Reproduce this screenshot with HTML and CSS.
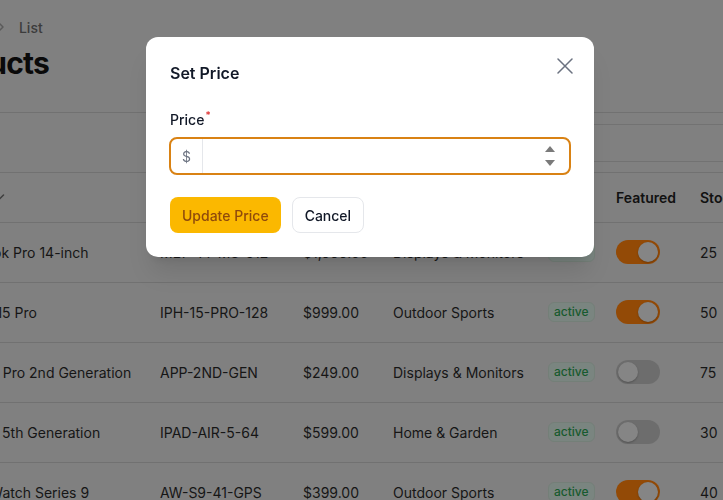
FILE: index.html
```html
<!DOCTYPE html>
<html lang="en">
<head>
<meta charset="utf-8">
<title>Products - List</title>
<link rel="stylesheet" href="styles.css">
</head>
<body>
<div class="page">
  <header class="page-header">
    <nav class="breadcrumb">
      <span>Products</span>
      <svg class="crumb-sep" width="12" height="12" viewBox="0 0 12 12"><path d="M4 2l4 4-4 4" fill="none" stroke="currentColor" stroke-width="1.5" stroke-linecap="round" stroke-linejoin="round"/></svg>
      <span>List</span>
    </nav>
    <h1 class="title">Products</h1>
  </header>

  <section class="table-card">
    <div class="toolbar">
      <div class="search"></div>
    </div>
    <table class="table">
      <colgroup>
        <col class="c-name"><col class="c-sku"><col class="c-price"><col class="c-cat"><col class="c-status"><col class="c-feat"><col class="c-stock">
      </colgroup>
      <thead>
        <tr>
          <th><span class="th-sort">Name <svg width="12" height="12" viewBox="0 0 12 12"><path d="M1.5 4l4.5 4.5L10.5 4" fill="none" stroke="currentColor" stroke-width="1.5" stroke-linecap="round" stroke-linejoin="round"/></svg></span></th>
          <th>SKU</th>
          <th>Price</th>
          <th>Category</th>
          <th>Status</th>
          <th>Featured</th>
          <th>Stock</th>
        </tr>
      </thead>
      <tbody>
        <tr>
          <td>MacBook Pro 14-inch</td><td>MBP-14-M3-512</td><td>$1,999.00</td><td>Displays &amp; Monitors</td>
          <td><span class="badge">active</span></td><td><span class="toggle on"><span class="knob"></span></span></td><td>25</td>
        </tr>
        <tr>
          <td>iPhone 15 Pro</td><td>IPH-15-PRO-128</td><td>$999.00</td><td>Outdoor Sports</td>
          <td><span class="badge">active</span></td><td><span class="toggle on"><span class="knob"></span></span></td><td>50</td>
        </tr>
        <tr>
          <td>AirPods Pro 2nd Generation</td><td>APP-2ND-GEN</td><td>$249.00</td><td>Displays &amp; Monitors</td>
          <td><span class="badge">active</span></td><td><span class="toggle"><span class="knob"></span></span></td><td>75</td>
        </tr>
        <tr>
          <td>iPad Air 5th Generation</td><td>IPAD-AIR-5-64</td><td>$599.00</td><td>Home &amp; Garden</td>
          <td><span class="badge">active</span></td><td><span class="toggle"><span class="knob"></span></span></td><td>30</td>
        </tr>
        <tr>
          <td>Apple Watch Series 9</td><td>AW-S9-41-GPS</td><td>$399.00</td><td>Outdoor Sports</td>
          <td><span class="badge">active</span></td><td><span class="toggle on"><span class="knob"></span></span></td><td>40</td>
        </tr>
      </tbody>
    </table>
  </section>
</div>

<div class="backdrop">
  <div class="modal" role="dialog" aria-label="Set Price">
    <div class="modal-head">
      <h2 class="modal-title">Set Price</h2>
      <button class="close" aria-label="Close">
        <svg width="16" height="16" viewBox="0 0 16 16"><path d="M1 1l14 14M15 1L1 15" fill="none" stroke="currentColor" stroke-width="1.5" stroke-linecap="round"/></svg>
      </button>
    </div>
    <div class="field">
      <label class="label">Price<sup class="req">*</sup></label>
      <div class="input-wrap">
        <span class="prefix">$</span>
        <input class="input" type="number">
        <span class="spin">
          <svg width="10" height="24" viewBox="0 0 10 24"><path d="M5 2l5 6H0z" fill="currentColor"/><path d="M0 16h10l-5 6z" fill="currentColor"/></svg>
        </span>
      </div>
    </div>
    <div class="actions">
      <button class="btn btn-primary">Update Price</button>
      <button class="btn btn-secondary">Cancel</button>
    </div>
  </div>
</div>
</body>
</html>
```

FILE: styles.css
```css
* { box-sizing: border-box; }

html, body {
  margin: 0;
  padding: 0;
}

body {
  font-family: Inter, "Noto Sans", sans-serif;
  background: #808080;
  color: #151515;
  overflow: hidden;
  height: 500px;
}

.page {
  width: 723px;
}

.page-header {
  padding-top: 17px;
  margin-left: -75px;
  height: 112px;
}

.breadcrumb {
  display: flex;
  align-items: center;
  gap: 10px;
  height: 20px;
  font-size: 14px;
  font-weight: 500;
  color: #3c3c3c;
}

.crumb-sep {
  color: #5a5a5a;
  margin-right: 2px;
}

.title {
  margin: 8px 0 0 -2px;
  font-size: 30px;
  line-height: 36px;
  font-weight: 700;
  letter-spacing: -0.025em;
  color: #0a0a0a;
}

.table-card {
  border-top: 1px solid #717171;
}

.toolbar {
  height: 60px;
  padding: 11px 0;
  display: flex;
  justify-content: flex-end;
  border-bottom: 1px solid #717171;
}

.search {
  width: 300px;
  margin-right: -40px;
  border: 1px solid #727272;
  border-radius: 8px;
  height: 38px;
}

.table {
  margin-left: -65px;
  width: 838px;
  table-layout: fixed;
  border-collapse: collapse;
  font-size: 14px;
}

.c-name { width: 213px; }
.c-sku { width: 143px; }
.c-price { width: 90px; }
.c-cat { width: 155px; }
.c-status { width: 68px; }
.c-feat { width: 84px; }
.c-stock { width: 85px; }

.table th {
  height: 49px;
  padding: 0 12px;
  text-align: left;
  font-weight: 600;
  color: #111;
  border-bottom: 1px solid #717171;
  white-space: nowrap;
}

.th-sort {
  display: inline-flex;
  align-items: center;
  gap: 6px;
}

.th-sort svg { color: #3e3e3e; }

.table td {
  height: 60px;
  padding: 0 12px;
  border-bottom: 1px solid #717171;
  white-space: nowrap;
  color: #161616;
}

.badge {
  display: inline-block;
  padding: 0 5px;
  height: 20px;
  line-height: 18px;
  font-size: 12px;
  font-weight: 500;
  color: #175a2e;
  background: #7a8580;
  border: 1px solid #747f78;
  border-radius: 6px;
}

.toggle {
  display: inline-flex;
  align-items: center;
  width: 44px;
  height: 24px;
  border-radius: 12px;
  background: #6d6d6d;
  padding: 2px;
  vertical-align: middle;
}

.toggle .knob {
  width: 20px;
  height: 20px;
  border-radius: 50%;
  background: #858585;
  box-shadow: 0 1px 2px rgba(0,0,0,0.25);
}

.toggle.on {
  background: #934a06;
  justify-content: flex-end;
}

/* Modal */
.backdrop {
  position: fixed;
  inset: 0;
  display: flex;
  justify-content: center;
  align-items: flex-start;
  padding-top: 37px;
}

.modal {
  width: 448px;
  margin-left: 17px;
  background: #fff;
  border-radius: 12px;
  padding: 24px;
  box-shadow: 0 20px 25px -5px rgba(0,0,0,0.1), 0 8px 10px -6px rgba(0,0,0,0.1);
  display: flex;
  flex-direction: column;
  gap: 24px;
}

.modal-head {
  display: flex;
  justify-content: space-between;
  align-items: center;
  height: 24px;
}

.modal-title {
  margin: 0;
  font-size: 16px;
  line-height: 24px;
  font-weight: 600;
  color: #111827;
}

.close {
  border: 0;
  background: none;
  padding: 0;
  margin-top: -14px;
  margin-right: -3px;
  color: #6b7280;
  display: flex;
}

.field {
  display: flex;
  flex-direction: column;
  gap: 7px;
  margin-top: 1px;
}

.label {
  font-size: 14px;
  line-height: 20px;
  font-weight: 500;
  color: #111827;
}

.req {
  color: #dc2626;
  font-weight: 500;
  font-size: 10px;
  margin-left: 1px;
  vertical-align: 6px;
  line-height: 0;
}

.input-wrap {
  display: flex;
  align-items: stretch;
  height: 38px;
  margin-left: -1px;
  margin-right: -1px;
  border: 2px solid #d98214;
  border-radius: 8px;
  overflow: hidden;
}

.prefix {
  width: 32px;
  display: flex;
  align-items: center;
  justify-content: center;
  font-size: 14px;
  color: #6b7280;
  border-right: 1px solid #e5e7eb;
}

.input {
  flex: 1;
  border: 0;
  outline: none;
  font: inherit;
  font-size: 14px;
  padding: 0 12px;
  min-width: 0;
  -moz-appearance: textfield;
}

.input::-webkit-inner-spin-button,
.input::-webkit-outer-spin-button {
  -webkit-appearance: none;
  margin: 0;
}

.spin {
  display: flex;
  align-items: center;
  padding-right: 14px;
  color: #7a7a7a;
}

.actions {
  display: flex;
  gap: 11px;
  margin-top: -2px;
}

.btn {
  height: 36px;
  padding: 0 12px;
  border-radius: 8px;
  font-family: inherit;
  font-size: 14px;
  font-weight: 500;
}

.btn-primary {
  background: #fbb800;
  border: 0;
  color: #8f4a0b;
}

.btn-secondary {
  background: #fff;
  border: 1px solid #e5e7eb;
  color: #111827;
}
```
